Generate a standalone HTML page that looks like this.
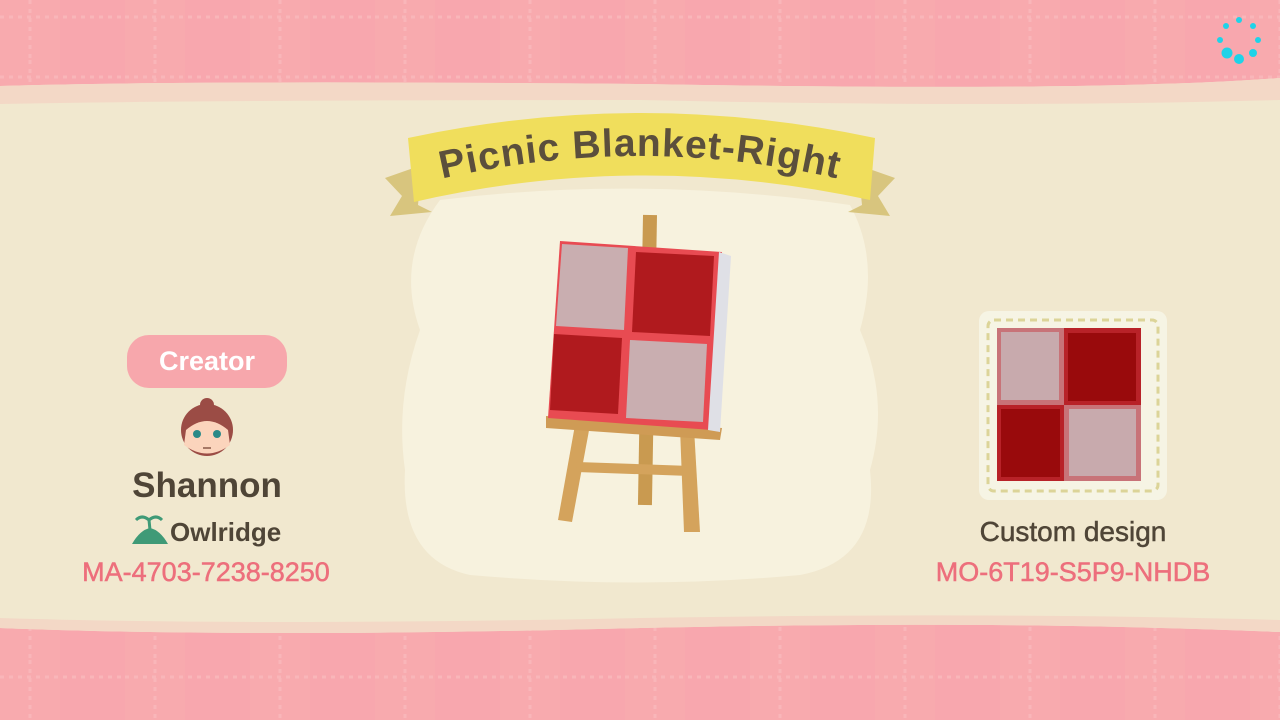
<!DOCTYPE html>
<html><head><meta charset="utf-8"><style>
html,body{margin:0;padding:0;}
body{width:1280px;height:720px;overflow:hidden;position:relative;background:#f1e7cc;font-family:"Liberation Sans",sans-serif;}
.t{position:absolute;font-weight:bold;text-align:center;white-space:nowrap;}
</style></head><body>
<svg width="1280" height="720" style="position:absolute;left:0;top:0">
<defs>
<pattern id="pk" width="125" height="60" patternUnits="userSpaceOnUse">
<rect width="125" height="60" fill="#f8a7ae"/>
<rect x="0" width="60" height="60" fill="#f9abad" opacity=".6"/>
<line x1="30" y1="0" x2="30" y2="60" stroke="#f9b6b9" stroke-width="3" stroke-dasharray="4 5"/>
<line x1="0" y1="17" x2="125" y2="17" stroke="#f9b6b9" stroke-width="3" stroke-dasharray="4 5"/>
</pattern>
<path id="arc" d="M420 184Q640 128 860 184"/>
</defs>
<rect width="1280" height="720" fill="#f1e8cf"/>
<path d="M0 0H1280V78Q1100 92 640 84Q200 80 0 86Z" fill="url(#pk)"/>
<path d="M0 86Q200 80 640 84Q1100 92 1280 78V100Q1000 108 640 100Q200 100 0 104Z" fill="#f3d8c6"/>
<path d="M0 720H1280V632Q1000 620 640 628Q250 638 0 628Z" fill="url(#pk)"/>
<path d="M0 628Q250 638 640 628Q1000 620 1280 632V620Q1000 612 640 618Q250 626 0 618Z" fill="#f3d8c6"/>
<path d="M440 200Q640 175 850 205Q880 260 860 330Q890 400 870 470Q880 560 800 575Q640 590 470 575Q400 560 405 470Q395 400 420 330Q395 260 440 200Z" fill="#f7f2de"/>
<!-- banner -->
<path d="M385 178L422 165L418 205L432 212L390 216L402 196Z" fill="#d8c57e"/>
<path d="M895 178L858 165L862 205L848 212L890 216L878 196Z" fill="#d8c57e"/>
<path d="M408 138Q640 88 875 138L870 200Q640 150 414 202Z" fill="#f0de5c"/>
<text font-family="Liberation Sans, sans-serif" font-weight="bold" font-size="39" fill="#5b4f3c" letter-spacing="1"><textPath href="#arc" startOffset="50%" text-anchor="middle">Picnic Blanket-Right</textPath></text>
<!-- easel -->
<rect x="643" y="215" width="14" height="290" fill="#c99a50" transform="rotate(1 650 215)"/>
<path d="M575 425L590 425L572 522L558 520Z" fill="#d4a35c"/>
<path d="M680 428L694 428L700 532L684 532Z" fill="#d4a35c"/>
<rect x="577" y="462" width="110" height="10" fill="#d4a35c" transform="rotate(2 577 462)"/>
<path d="M546 416L722 428L720 440L546 428Z" fill="#cf9b55"/>
<!-- canvas -->
<path d="M560 241L722 252L712 430L548 418Z" fill="#e84b52"/>
<path d="M719 252L731 256L720 432L708 430Z" fill="#dfe0e6"/>
<path d="M562 244L628 248L624 330L556 326Z" fill="#c9aeb0"/>
<path d="M636 252L714 256L710 336L632 332Z" fill="#b01a1e"/>
<path d="M554 334L622 338L618 414L550 410Z" fill="#b01a1e"/>
<path d="M630 340L707 344L703 422L626 418Z" fill="#c9aeb0"/>
<!-- thumbnail -->
<rect x="979" y="311" width="188" height="189" rx="10" fill="#f6f4e4"/>
<rect x="988" y="320" width="170" height="171" rx="6" fill="none" stroke="#dcd498" stroke-width="3" stroke-dasharray="7 5"/>
<rect x="997" y="328" width="144" height="153" fill="#c87378"/>
<rect x="1064" y="328" width="77" height="77" fill="#b82228"/>
<rect x="997" y="405" width="67" height="76" fill="#b82228"/>
<rect x="1001" y="332" width="58" height="68" fill="#c8aaad"/>
<rect x="1068" y="333" width="68" height="68" fill="#990a0c"/>
<rect x="1001" y="409" width="59" height="68" fill="#990a0c"/>
<rect x="1069" y="409" width="67" height="67" fill="#c8aaad"/>
<!-- creator pill -->
<rect x="127" y="335" width="160" height="53" rx="22" fill="#f7a7ac"/>
<!-- face -->
<circle cx="207" cy="405" r="7" fill="#9b4c45"/>
<circle cx="207" cy="430" r="26" fill="#9b4c45"/>
<path d="M186 430Q207 412 228 430L230 445Q207 462 184 445Z" fill="#fbd4bc"/>
<circle cx="197" cy="434" r="4" fill="#2a8a88"/><circle cx="217" cy="434" r="4" fill="#2a8a88"/>
<path d="M203 448H211" stroke="#8a5a48" stroke-width="1.5"/>
<!-- island -->
<path d="M132 544Q140 530 150 528Q160 530 168 544Z" fill="#3f9a77"/>
<path d="M150 530L149 520M149 520Q142 514 136 520M149 520Q156 514 162 520" stroke="#3f9a77" stroke-width="3" fill="none"/>
<!-- spinner -->
<g fill="#1ed3e8"><circle cx="1239" cy="20" r="3"/><circle cx="1226" cy="26" r="3"/><circle cx="1253" cy="26" r="3"/><circle cx="1220" cy="40" r="3"/><circle cx="1258" cy="40" r="3"/><circle cx="1227" cy="53" r="5.5"/><circle cx="1239" cy="59" r="5"/><circle cx="1253" cy="53" r="4"/></g>
</svg>
<div class="t" style="left:127px;top:346px;width:160px;font-size:27px;color:#fff">Creator</div>
<div class="t" style="left:57px;top:466px;width:300px;font-size:35px;color:#4f4537">Shannon</div>
<div class="t" style="left:170px;top:517px;font-size:26px;color:#4f4537">Owlridge</div>
<div class="t" style="left:56px;top:557px;width:300px;font-size:27px;color:#ed6f7c;font-weight:normal;-webkit-text-stroke:0.5px #ed6f7c">MA-4703-7238-8250</div>
<div class="t" style="left:923px;top:516px;width:300px;font-size:28px;color:#4f4537;font-weight:normal;-webkit-text-stroke:0.5px #4f4537">Custom design</div>
<div class="t" style="left:923px;top:557px;width:300px;font-size:27px;color:#ed6f7c;font-weight:normal;-webkit-text-stroke:0.5px #ed6f7c">MO-6T19-S5P9-NHDB</div>
</body></html>
